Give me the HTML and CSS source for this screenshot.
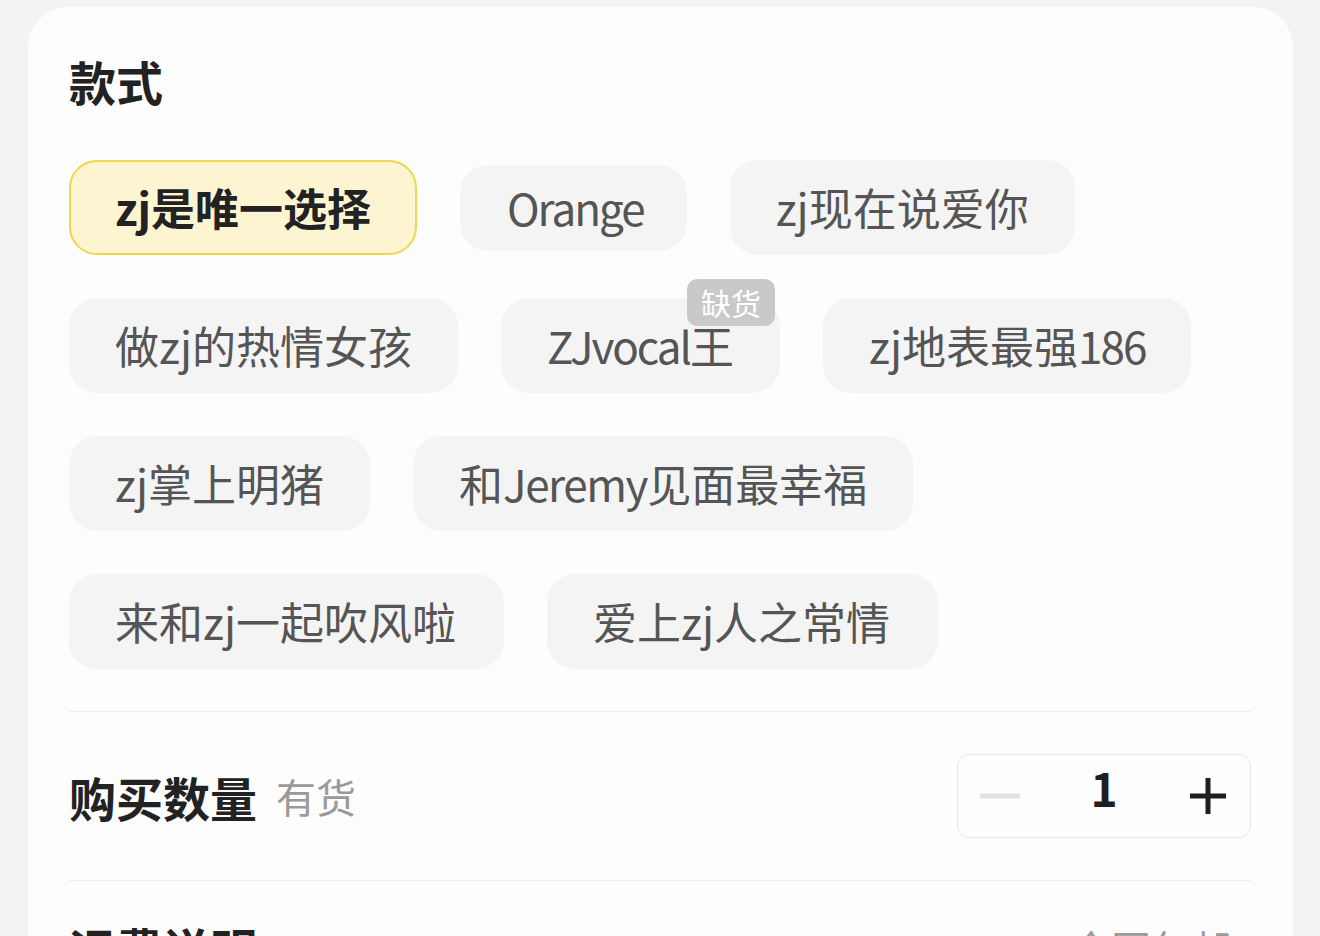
FILE: index.html
```html
<!DOCTYPE html>
<html lang="zh-CN">
<head>
<meta charset="utf-8">
<title>选择款式</title>
<link rel="stylesheet" href="styles.css">
</head>
<body>
<main class="sheet">
  <section class="spec">
    <h2 class="section-title">款式</h2>
    <div class="chips">
      <button class="chip chip-active">zj是唯一选择</button>
      <button class="chip chip-latin"><span class="latin">Orange</span></button>
      <button class="chip">zj现在说爱你</button>
      <button class="chip">做zj的热情女孩</button>
      <button class="chip"><span class="latin">ZJvocal</span>王<span class="badge">缺货</span></button>
      <button class="chip">zj地表最强<span class="latin">186</span></button>
      <button class="chip">zj掌上明猪</button>
      <button class="chip">和<span class="latin latin-tight">Jeremy</span>见面最幸福</button>
      <button class="chip chip-wide">来和zj一起吹风啦</button>
      <button class="chip chip-wide">爱上zj人之常情</button>
    </div>
  </section>

  <section class="row qty">
    <div class="qty-label">
      <h2 class="section-title">购买数量</h2>
      <span class="stock">有货</span>
    </div>
    <div class="stepper">
      <span class="step step-minus"><svg width="40" height="6" viewBox="0 0 40 6"><path d="M0 3H40" stroke="#e2e2e2" stroke-width="5"/></svg></span>
      <span class="step-value">1</span>
      <span class="step step-plus"><svg width="36" height="36" viewBox="0 0 36 36"><path d="M0 18H36M18 0V36" stroke="#1f1f1f" stroke-width="5"/></svg></span>
    </div>
  </section>

  <section class="row shipping">
    <h2 class="section-title">运费说明</h2>
    <span class="shipping-note">全国包邮</span>
  </section>
</main>
</body>
</html>
```

FILE: styles.css
```css
* {
  box-sizing: border-box;
}

html, body {
  margin: 0;
  padding: 0;
  height: 100%;
  overflow: hidden;
}

body {
  background: #f3f3f3;
  font-family: "Noto Sans CJK SC", "Noto Sans", sans-serif;
  color: #222;
}

.sheet {
  margin: 7px 27px 0 28px;
  background: #fdfdfd;
  border-radius: 40px 40px 0 0;
  padding: 50px 42px 0 41px;
  min-height: 1000px;
}

.section-title {
  margin: 0;
  font-size: 47px;
  line-height: 47px;
  font-weight: 700;
  color: #222;
}

.chips {
  margin-top: 56px;
  display: flex;
  flex-wrap: wrap;
  align-items: center;
  gap: 43px;
  padding-bottom: 42px;
  border-bottom: 1px solid #ededed;
}

.chip {
  position: relative;
  font-family: inherit;
  font-size: 44px;
  line-height: 43px;
  font-weight: 400;
  color: #555;
  background: #f4f4f4;
  border: 2px solid transparent;
  border-radius: 28px;
  padding: 24px 44px;
  margin: 0;
  cursor: pointer;
}

.chip-wide {
  padding-right: 46px;
}

/* Latin runs are set a touch tighter than the CJK text */
.latin {
  letter-spacing: -2px;
}

.latin-tight {
  letter-spacing: -1.4px;
}

.chip-latin {
  padding: 19px 41px 20px 45px;
}

.chip-active {
  background: #fdf5d2;
  border-color: #f0d64c;
  color: #222;
  font-weight: 700;
}

.badge {
  position: absolute;
  top: -21px;
  right: 3px;
  background: #c9c9c9;
  color: #fff;
  font-size: 30px;
  line-height: 47px;
  letter-spacing: 0;
  padding: 0 14px;
  border-radius: 10px;
}

.row {
  display: flex;
  align-items: center;
  justify-content: space-between;
}

.qty {
  padding: 42px 0 42px;
  border-bottom: 1px solid #ededed;
}

.qty-label {
  display: flex;
  align-items: center;
  gap: 19px;
}

.stock {
  font-size: 40px;
  line-height: 46px;
  color: #9a9a9a;
}

.stepper {
  width: 294px;
  height: 84px;
  border: 1px solid #e6e6e6;
  border-radius: 12px;
  display: grid;
  grid-template-columns: 84px 1fr 84px;
  align-items: center;
  justify-items: center;
}

.step {
  display: flex;
  align-items: center;
  justify-content: center;
}

.step-value {
  font-size: 46px;
  line-height: 46px;
  font-weight: 700;
  color: #1f1f1f;
  margin-top: -18px;
}

.shipping {
  padding-top: 43px;
}

.shipping-note {
  font-size: 40px;
  line-height: 46px;
  color: #9a9a9a;
  margin-right: 20px;
}
```
